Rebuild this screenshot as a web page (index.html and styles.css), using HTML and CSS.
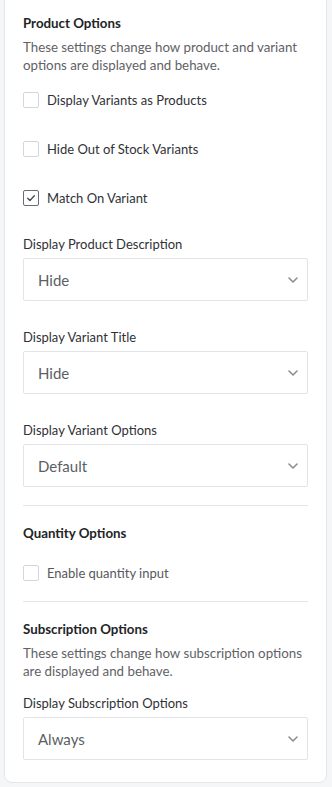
FILE: index.html
```html
<!DOCTYPE html>
<html>
<head>
<meta charset="utf-8">
<link rel="stylesheet" href="styles.css">
</head>
<body>
<div class="card">
  <section class="group">
    <h2 class="heading">Product Options</h2>
    <p class="desc">These settings change how product and variant options are displayed and behave.</p>
    <div class="checks">
      <label class="check"><span class="box"></span><span>Display Variants as Products</span></label>
      <label class="check"><span class="box"></span><span>Hide Out of Stock Variants</span></label>
      <label class="check"><span class="box checked"><svg viewBox="0 0 16 16" width="16" height="16"><path d="M4.2 8.3 L6.8 10.8 L11.8 5.4" fill="none" stroke="#4a4d50" stroke-width="1.6" stroke-linecap="round" stroke-linejoin="round"/></svg></span><span>Match On Variant</span></label>
    </div>
    <div class="field">
      <div class="label">Display Product Description</div>
      <div class="select"><span>Hide</span><svg class="chev" viewBox="0 0 10 6" width="10" height="6"><path d="M1 1 L5 5 L9 1" fill="none" stroke="#8a8e93" stroke-width="1.6" stroke-linecap="round" stroke-linejoin="round"/></svg></div>
    </div>
    <div class="field">
      <div class="label">Display Variant Title</div>
      <div class="select"><span>Hide</span><svg class="chev" viewBox="0 0 10 6" width="10" height="6"><path d="M1 1 L5 5 L9 1" fill="none" stroke="#8a8e93" stroke-width="1.6" stroke-linecap="round" stroke-linejoin="round"/></svg></div>
    </div>
    <div class="field">
      <div class="label">Display Variant Options</div>
      <div class="select"><span>Default</span><svg class="chev" viewBox="0 0 10 6" width="10" height="6"><path d="M1 1 L5 5 L9 1" fill="none" stroke="#8a8e93" stroke-width="1.6" stroke-linecap="round" stroke-linejoin="round"/></svg></div>
    </div>
  </section>
  <hr class="divider">
  <section class="group">
    <h2 class="heading">Quantity Options</h2>
    <div class="checks single">
      <label class="check muted"><span class="box"></span><span>Enable quantity input</span></label>
    </div>
  </section>
  <hr class="divider">
  <section class="group">
    <h2 class="heading">Subscription Options</h2>
    <p class="desc">These settings change how subscription options are displayed and behave.</p>
    <div class="field after-desc">
      <div class="label">Display Subscription Options</div>
      <div class="select"><span>Always</span><svg class="chev" viewBox="0 0 10 6" width="10" height="6"><path d="M1 1 L5 5 L9 1" fill="none" stroke="#8a8e93" stroke-width="1.6" stroke-linecap="round" stroke-linejoin="round"/></svg></div>
    </div>
  </section>
</div>
</body>
</html>
```
FILE: styles.css
```css
html, body {
  margin: 0;
  padding: 0;
}
body {
  background: #f5f6f8;
  font-family: Lato, "Open Sans", sans-serif;
  color: #303236;
  width: 332px;
  height: 787px;
  overflow: hidden;
}
.card {
  box-sizing: border-box;
  width: 323px;
  margin: -20px 0 0 4px;
  background: #ffffff;
  border: 1px solid #e3e6ea;
  border-radius: 8px;
  padding: 33px 18px 22px 18px;
}
.group {
  display: flex;
  flex-direction: column;
}
.heading {
  margin: 0;
  font-size: 13.3px;
  font-weight: 700;
  line-height: 18px;
  color: #222426;
}
.desc {
  margin: 6px 0 0 0;
  font-size: 13.3px;
  line-height: 18px;
  color: #5f6266;
}
.checks {
  display: flex;
  flex-direction: column;
  gap: 33px;
  margin-top: 18px;
}
.checks.single {
  margin-top: 23px;
  margin-bottom: 2px;
}
.check {
  display: flex;
  align-items: center;
  gap: 8px;
  font-size: 13px;
  line-height: 16px;
  color: #303236;
}
.check.muted {
  color: #55585c;
}
.box {
  box-sizing: border-box;
  width: 16px;
  height: 16px;
  border: 1px solid #d3d6da;
  border-radius: 2px;
  display: flex;
  align-items: center;
  justify-content: center;
}
.box.checked {
  border-color: #6a6d71;
}
.field {
  margin-top: 27px;
  display: flex;
  flex-direction: column;
}
.checks + .field {
  margin-top: 29px;
}
.field.after-desc {
  margin-top: 14px;
}
.label {
  font-size: 13px;
  line-height: 18px;
  color: #303236;
  margin-bottom: 5px;
}
.select {
  box-sizing: border-box;
  height: 43px;
  border: 1px solid #e1e4e8;
  border-radius: 2px;
  display: flex;
  align-items: center;
  justify-content: space-between;
  padding: 0 9px 0 14px;
  font-size: 15px;
  color: #5c5f63;
}
.chev {
  display: block;
}
.divider {
  border: 0;
  border-top: 1px solid #e5e7ea;
  margin: 18px 0 18px 0;
}
```
